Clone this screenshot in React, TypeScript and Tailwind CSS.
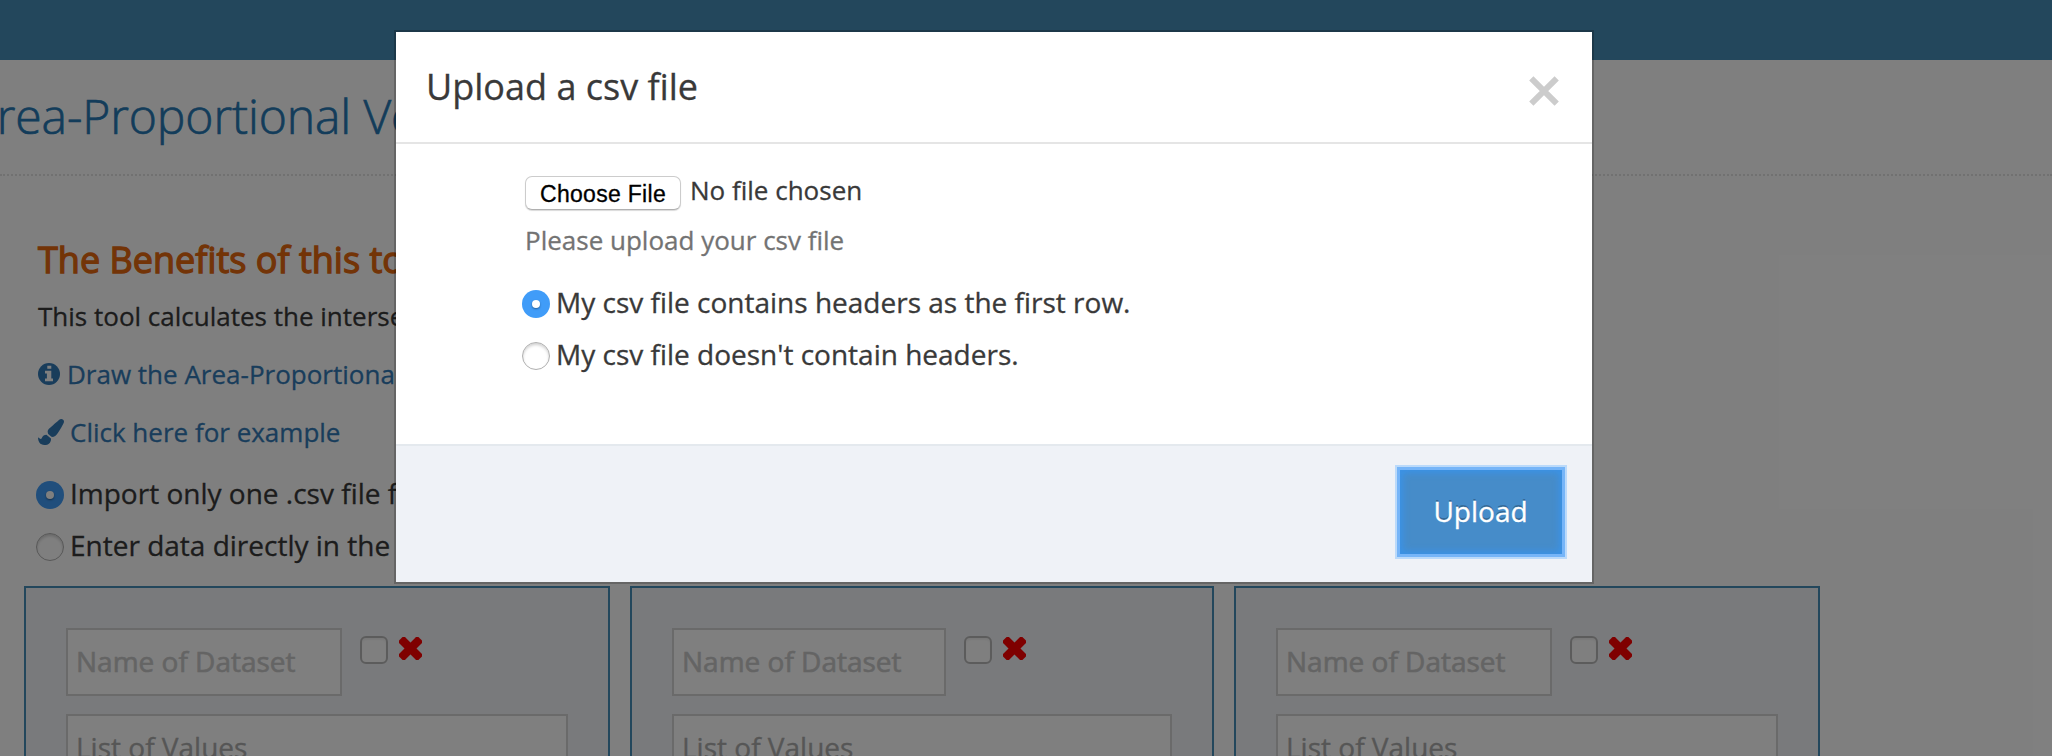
import React from "react";
import { FaPaintBrush } from "react-icons/fa";

function Radio({ checked }: { checked?: boolean }) {
  return checked ? (
    <span className="flex size-7 shrink-0 items-center justify-center rounded-full bg-[#409cf8]">
      <span className="size-2 rounded-full bg-white shadow-[0_1px_2px_rgba(0,0,0,0.4)]" />
    </span>
  ) : (
    <span className="size-7 shrink-0 rounded-full border border-[#b0b0b0] bg-white shadow-[inset_0_2px_3px_rgba(0,0,0,0.18)]" />
  );
}

function RadioRow({ checked, children }: { checked?: boolean; children: React.ReactNode }) {
  return (
    <label className="flex h-[52px] items-center gap-[6px] text-[28px] leading-[40px] whitespace-nowrap">
      <Radio checked={checked} />
      <span className="-mt-[5px]">{children}</span>
    </label>
  );
}

function InfoIcon() {
  return (
    <svg viewBox="0 0 22 22" className="size-[22px]">
      <circle cx="11" cy="11" r="11" fill="currentColor" />
      <path
        d="M9.3 2.8h4v3h-4zM7 7.8h6.3v7.8H15v2.7H7v-2.7h1.9v-5.1H7z"
        fill="#ffffff"
      />
    </svg>
  );
}

function Cross() {
  return (
    <svg viewBox="0 0 23 23" className="ml-[11px] mt-[9px] size-[23px]" fill="#ff0000">
      <rect x="-2.2" y="7.3" width="27.4" height="8.4" rx="2" transform="rotate(45 11.5 11.5)" />
      <rect x="-2.2" y="7.3" width="27.4" height="8.4" rx="2" transform="rotate(-45 11.5 11.5)" />
    </svg>
  );
}

function Dataset() {
  return (
    <section className="h-[220px] border-2 border-[#468eb8] bg-[#f2f4f8] px-10 pt-10">
      <div className="flex items-start">
        <div className="h-[68px] w-[calc(100%-226px)] border-2 border-[#d5d5d5] bg-white pl-2 text-[28px] leading-[62px] whitespace-nowrap text-[#c9c9c9] [-webkit-text-stroke:0.6px_#c9c9c9]">
          Name of Dataset
        </div>
        <span className="ml-[18px] mt-2 size-7 rounded-[6px] border-2 border-[#b9b9b9] bg-white shadow-[inset_0_2px_2px_rgba(0,0,0,0.06)]" />
        <Cross />
      </div>
      <div className="mt-[18px] h-[120px] border-2 border-[#d5d5d5] bg-white pl-2 pt-[10px] text-[28px] leading-[42px] text-[#acacac]">
        List of Values
      </div>
    </section>
  );
}

export default function App() {
  return (
    <div className="relative h-[756px] w-full overflow-hidden bg-white font-['Open_Sans','Noto_Sans',sans-serif] text-[#393939] [-webkit-text-stroke:0.3px]">
      <div className="h-[60px] bg-[#468eb8]" />
      <header className="h-[116px] border-b-2 border-dotted border-[#e2e2e2]">
        <h1 className="-ml-[32px] pt-[23px] text-[48px] font-light leading-[66px] tracking-[-0.1px] whitespace-nowrap text-[#2679b5] [-webkit-text-stroke:0.7px]">
          Area-Proportional Venn Diagram
        </h1>
      </header>
      <main className="flex h-[410px] flex-col pl-[38px] text-[26px] whitespace-nowrap">
        <h2 className="mt-[60px] h-[48px] text-[36px] leading-[48px] text-[#e6680f] [-webkit-text-stroke:1.3px_#e6680f]">
          The Benefits of this tool
        </h2>
        <p className="mt-[12px] leading-[40px]">This tool calculates the intersection</p>
        <a className="mt-[18px] flex h-10 items-center gap-[7px] leading-[40px] text-[#337ab7]">
          <InfoIcon />
          Draw the Area-Proportional
        </a>
        <a className="mt-[18px] flex h-10 items-center gap-[6px] leading-[40px] text-[#337ab7]">
          <FaPaintBrush className="size-[26px]" />
          Click here for example
        </a>
        <div className="-ml-[2px] mt-[17px]">
          <RadioRow checked>Import only one .csv file for</RadioRow>
          <RadioRow>Enter data directly in the</RadioRow>
        </div>
      </main>
      <div className="grid grid-cols-[586px_584px_586px] gap-5 pl-6">
        <Dataset />
        <Dataset />
        <Dataset />
      </div>

      <div className="absolute inset-0 bg-black/50">
        <div className="ml-[394px] mt-[30px] w-[1200px] border-2 border-black/20 bg-white bg-clip-padding">
          <div className="flex h-[112px] justify-between border-b-2 border-[#e5e5e5] pl-[30px] pr-[33px]">
            <h4 className="pt-[31px] text-[36px] leading-[48px]">Upload a csv file</h4>
            <svg viewBox="0 0 30 30" className="mt-11 size-[30px]" fill="none">
              <path d="M2.3 2.3 27.7 27.7M27.7 2.3 2.3 27.7" stroke="#cccccc" strokeWidth="6" />
            </svg>
          </div>
          <div className="h-[300px] pl-[129px] pt-8">
            <div className="flex h-10 gap-[9px] text-[26px] leading-[40px]">
              <button className="h-[34px] w-[156px] rounded-[7px] border border-[#cccccc] border-b-[#b0b0b0] bg-white pt-[2px] font-['Liberation_Sans',sans-serif] text-[23px] leading-[30px] tracking-[0.3px] text-black shadow-[0_1px_1px_rgba(0,0,0,0.15)]">
                Choose File
              </button>
              <span className="-mt-[6px]">No file chosen</span>
            </div>
            <p className="mt-[4px] text-[26px] leading-[40px] text-[#737373]">Please upload your csv file</p>
            <div className="-ml-[3px] mt-[18px]">
              <RadioRow checked>My csv file contains headers as the first row.</RadioRow>
              <RadioRow>My csv file doesn't contain headers.</RadioRow>
            </div>
          </div>
          <div className="flex h-[138px] justify-end border-t-2 border-[#e4e9ee] bg-[#eff2f7] pr-[30px] pt-6">
            <button className="h-[84px] w-[162px] bg-[#468cc9] pr-px pb-[2px] text-[28px] text-white shadow-[0_0_0_3px_#76b5f8,0_0_0_5px_#bbdafa,inset_0_0_6px_3px_#3b92e6] [text-shadow:0_-2px_0_rgba(0,0,0,0.25)]">
              Upload
            </button>
          </div>
        </div>
      </div>
    </div>
  );
}
